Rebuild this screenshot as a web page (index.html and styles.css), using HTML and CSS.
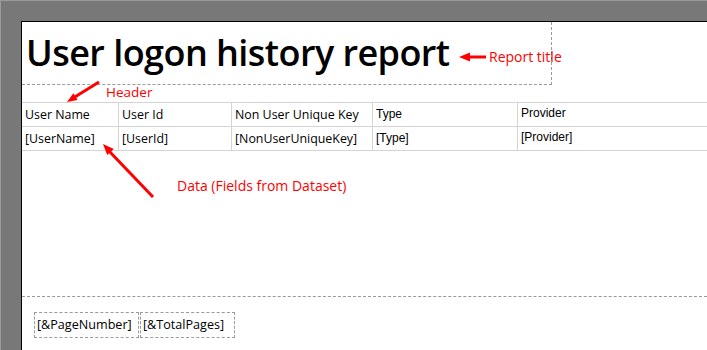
FILE: index.html
```html
<!DOCTYPE html>
<html lang="en">
<head>
    <meta charset="UTF-8">
    <title>User logon history report</title>
    <link rel="stylesheet" href="styles.css">
</head>
<body>
    <div class="page">
        <div class="report-body">
            <!-- Report title -->
            <div class="title-box">
                <h1 class="report-title">User logon history report</h1>
            </div>

            <!-- Table: header + data row -->
            <div class="report-table">
                <div class="cell head">User Name</div>
                <div class="cell head">User Id</div>
                <div class="cell head">Non User Unique Key</div>
                <div class="cell head arial">Type</div>
                <div class="cell head arial high">Provider</div>

                <div class="cell">[UserName]</div>
                <div class="cell">[UserId]</div>
                <div class="cell">[NonUserUniqueKey]</div>
                <div class="cell arial">[Type]</div>
                <div class="cell arial high">[Provider]</div>
            </div>
        </div>

        <div class="report-footer">
            <div class="field-box page-number">[&amp;PageNumber]</div>
            <div class="field-box total-pages">[&amp;TotalPages]</div>
        </div>
    </div>

    <!-- Annotations drawn over the designer -->
    <svg class="annotations" width="707" height="350" viewBox="0 0 707 350">
        <line x1="467" y1="57" x2="486" y2="57" stroke="#ff0000" stroke-width="3"/>
        <polygon points="459,57 470,52.5 470,61.5" fill="#ff0000"/>

        <line x1="74" y1="97.5" x2="99" y2="82" stroke="#ff0000" stroke-width="3"/>
        <polygon points="67,102 77.6,100.1 73.4,93.3" fill="#ff0000"/>

        <line x1="109" y1="151" x2="153" y2="197" stroke="#ff0000" stroke-width="3"/>
        <polygon points="103,144 113.8,148.9 107.2,155.1" fill="#ff0000"/>
    </svg>
    <span class="note note-title">Report title</span>
    <span class="note note-header">Header</span>
    <span class="note note-data">Data (Fields from Dataset)</span>
</body>
</html>
```

FILE: styles.css
```css
html, body {
    margin: 0;
    padding: 0;
}
body {
    position: relative;
    width: 706px;
    height: 349px;
    overflow: hidden;
    background-color: #787878;
    border-top: 1px solid #9a9a9a;
    border-left: 1px solid #9a9a9a;
    font-family: "Open Sans", "Noto Sans", sans-serif;
    color: #000;
}
.page {
    margin: 20px 0 0 20px; /* black edge lands on x=21, y=21 */
    height: 328px;
    border-top: 1px solid #000;
    border-left: 1px solid #000;
    background-color: #fff;
}
.report-body {
    height: 274px;
}
.title-box {
    width: 529px;
    height: 62px;
    border-right: 1px dashed #9a9a9a;
    border-bottom: 1px dashed #9a9a9a;
    display: flex;
    align-items: center;
}
.report-title {
    margin: 0;
    padding-left: 4px;
    font-size: 36px;
    font-weight: 600;
    letter-spacing: -0.55px;
    line-height: 1;
}
.report-table {
    margin-top: 17px;
    display: grid;
    grid-template-columns: 96px 113px 141px 145px 1fr;
    border-top: 1px solid #d4d4d4;
}
.cell {
    height: 23px;
    padding-left: 3px;
    font-size: 12.4px;
    line-height: 23px;
    border-bottom: 1px solid #d4d4d4;
    border-left: 1px solid #d4d4d4;
    white-space: nowrap;
}
.cell:nth-child(5n+1) {
    border-left: none;
}
.arial {
    font-family: "Liberation Sans", Arial, sans-serif;
    font-size: 12px;
}
.high {
    line-height: 20px;
}
.report-footer {
    border-top: 1px dashed #9a9a9a;
    padding: 15px 0 0 12px;
    display: flex;
    gap: 1px;
}
.field-box {
    height: 24px;
    line-height: 24px;
    padding-left: 2px;
    border: 1px dashed #9a9a9a;
    font-size: 12.6px;
    white-space: nowrap;
}
.page-number {
    width: 101px;
}
.total-pages {
    width: 91px;
}
.annotations {
    position: absolute;
    top: -1px;
    left: -1px;
}
.note {
    position: absolute;
    color: #ff0000;
    font-size: 14px;
    line-height: 16px;
    white-space: nowrap;
}
.note-title {
    left: 488px;
    top: 48px;
}
.note-header {
    left: 105px;
    top: 83px;
    font-size: 13.5px;
}
.note-data {
    left: 176px;
    top: 177px;
}
```
